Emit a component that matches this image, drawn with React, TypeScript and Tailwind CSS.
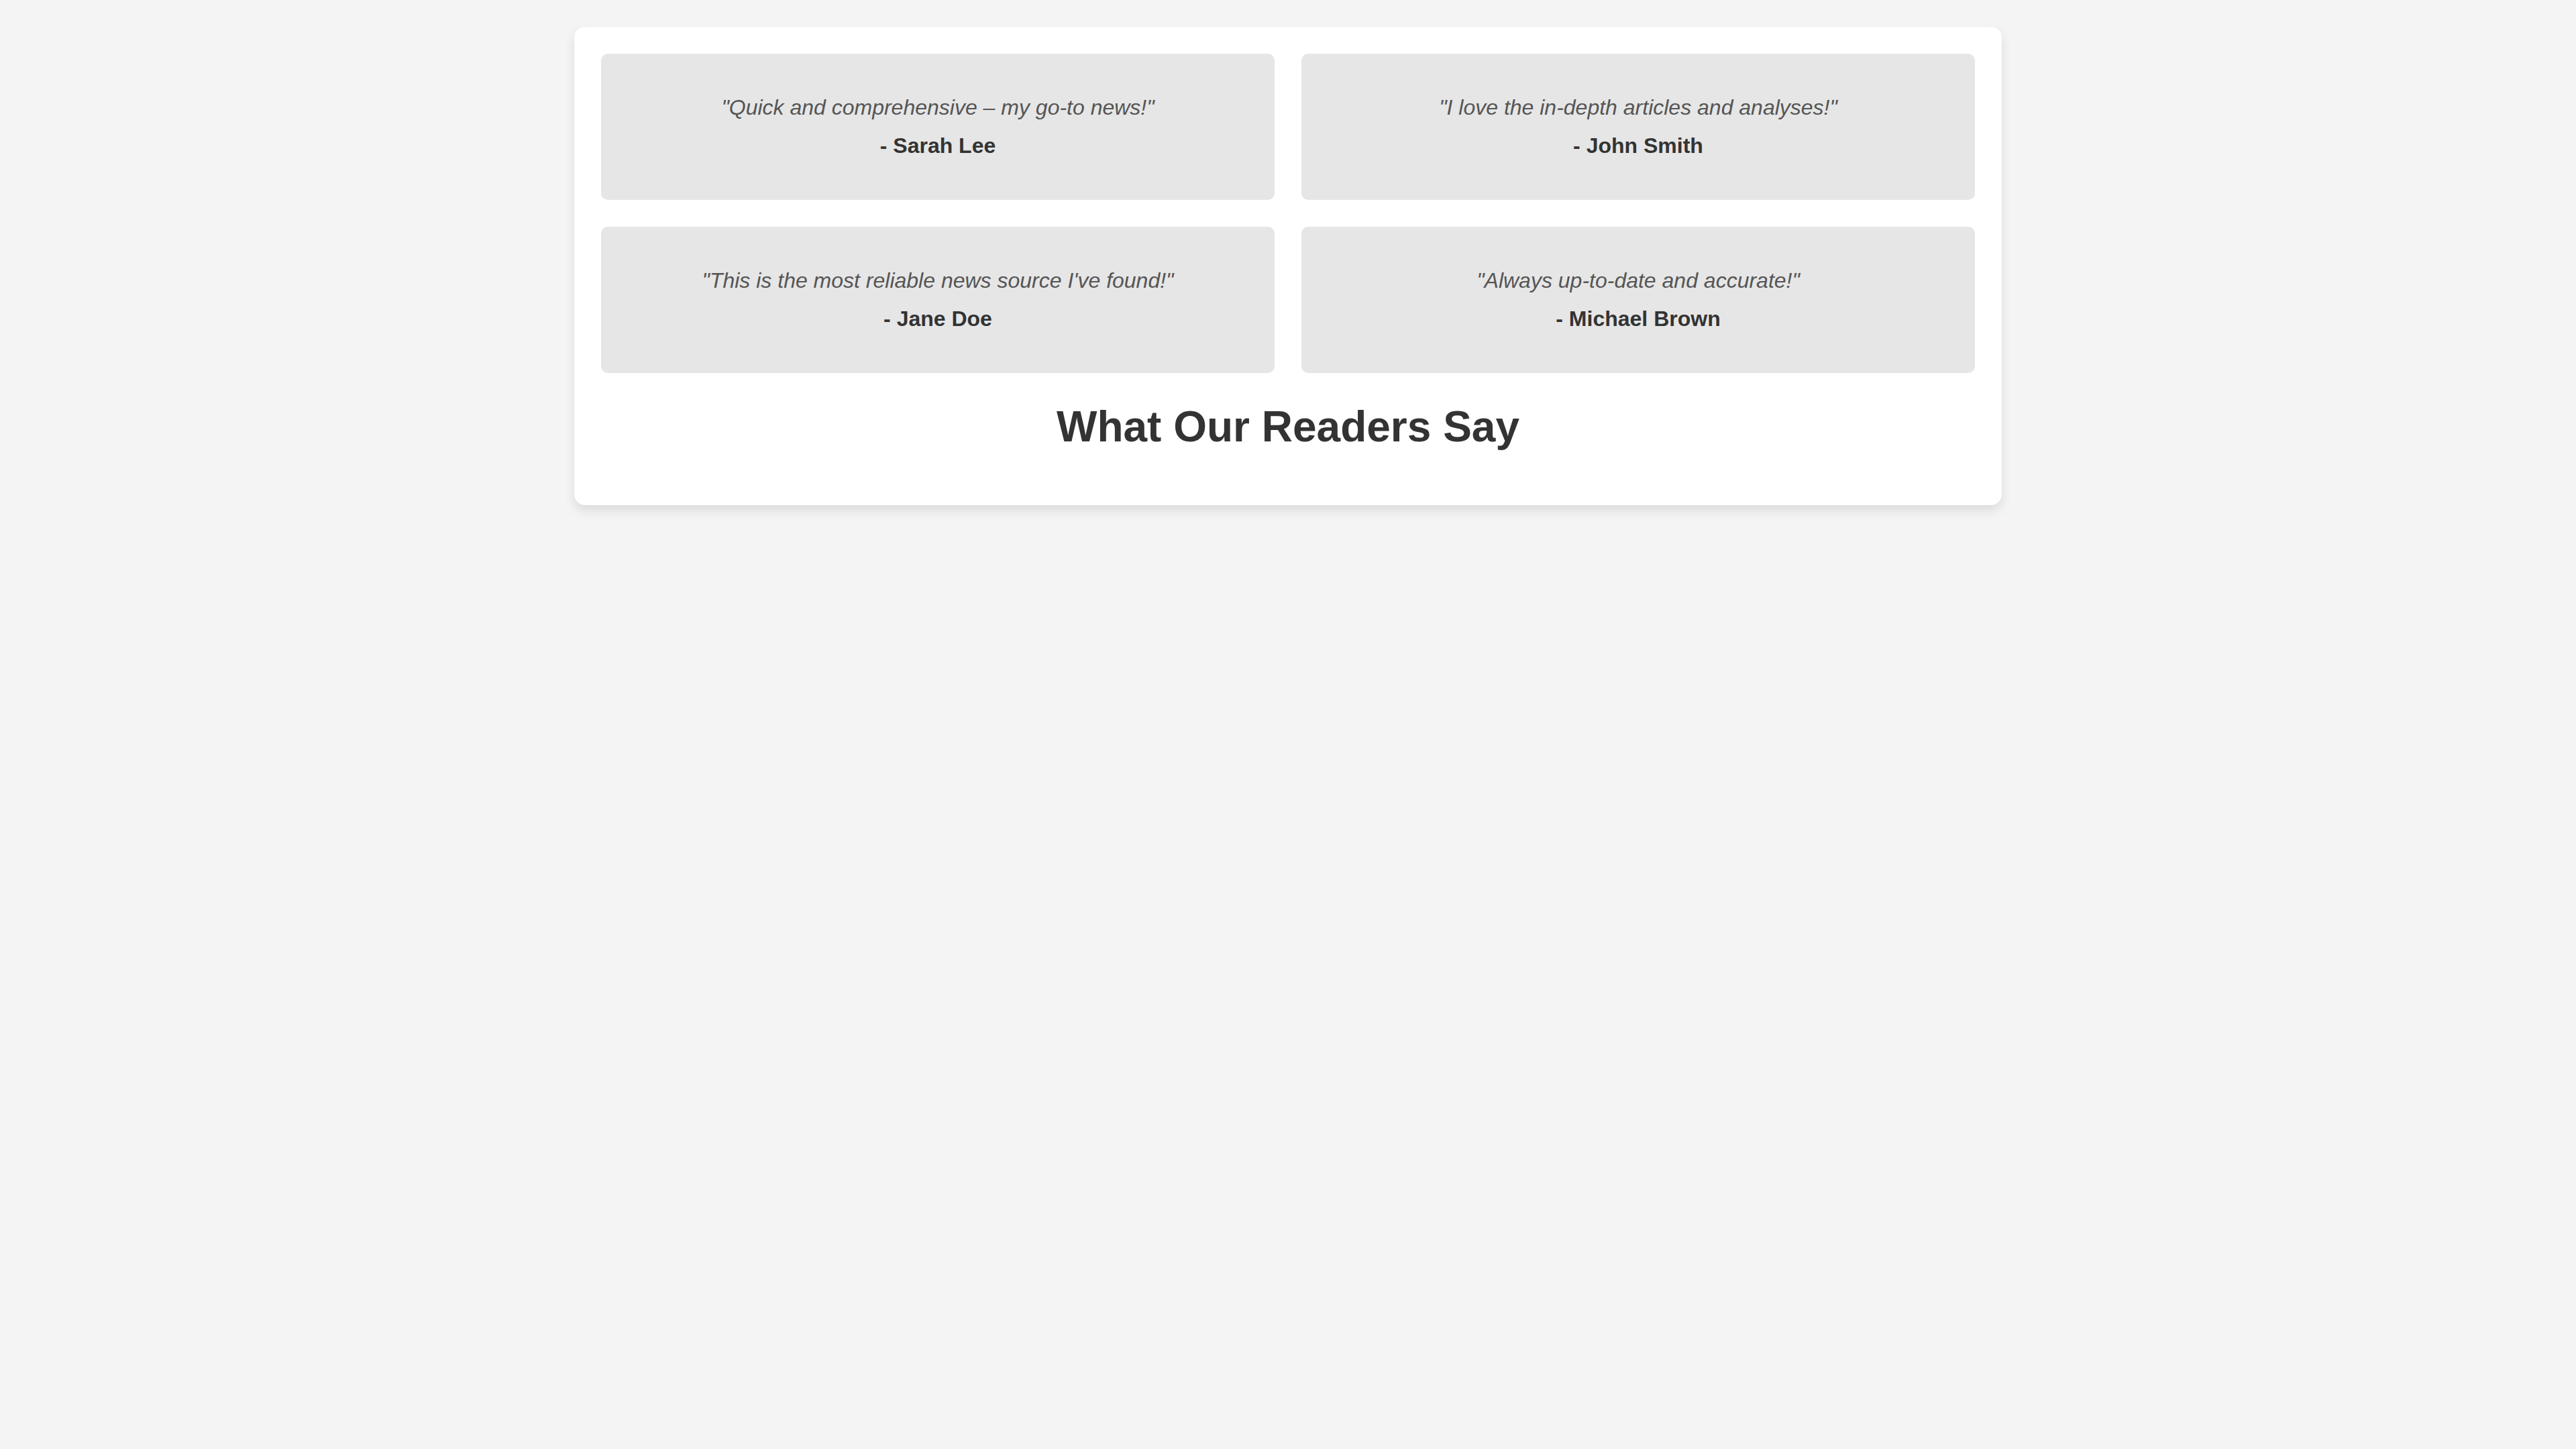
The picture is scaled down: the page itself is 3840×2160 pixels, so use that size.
import React from "react"

const testimonials = [
  { quote: "\"Quick and comprehensive – my go-to news!\"", name: "- Sarah Lee" },
  { quote: "\"I love the in-depth articles and analyses!\"", name: "- John Smith" },
  { quote: "\"This is the most reliable news source I've found!\"", name: "- Jane Doe" },
  { quote: "\"Always up-to-date and accurate!\"", name: "- Michael Brown" },
]

function Testimonial({ quote, name }: { quote: string; name: string }) {
  return (
    <div className="rounded-[10px] bg-[#e6e6e6] p-[30px] text-center">
      <p className="mt-[32px] mb-[20px] text-[32px] leading-[37px] italic text-[#555555]">{quote}</p>
      <p className="mb-[32px] text-[32px] leading-[37px] font-bold text-[#333333]">{name}</p>
    </div>
  )
}

export default function App() {
  return (
    <div
      className="min-h-screen bg-[#f4f4f4] pt-[40px]"
      style={{ fontFamily: '"Liberation Sans", Arial, sans-serif' }}
    >
      <div className="mx-auto w-[2128px] rounded-[16px] bg-white px-[40px] pt-[40px] pb-[80px] shadow-[0_8px_16px_rgba(0,0,0,0.1)]">
        <div className="grid grid-cols-2 gap-[40px]">
          {testimonials.map((t) => (
            <Testimonial key={t.name} quote={t.quote} name={t.name} />
          ))}
        </div>
        <h2 className="mt-[43px] text-center text-[64px] leading-[74px] font-bold text-[#333333]">
          What Our Readers Say
        </h2>
      </div>
    </div>
  )
}
